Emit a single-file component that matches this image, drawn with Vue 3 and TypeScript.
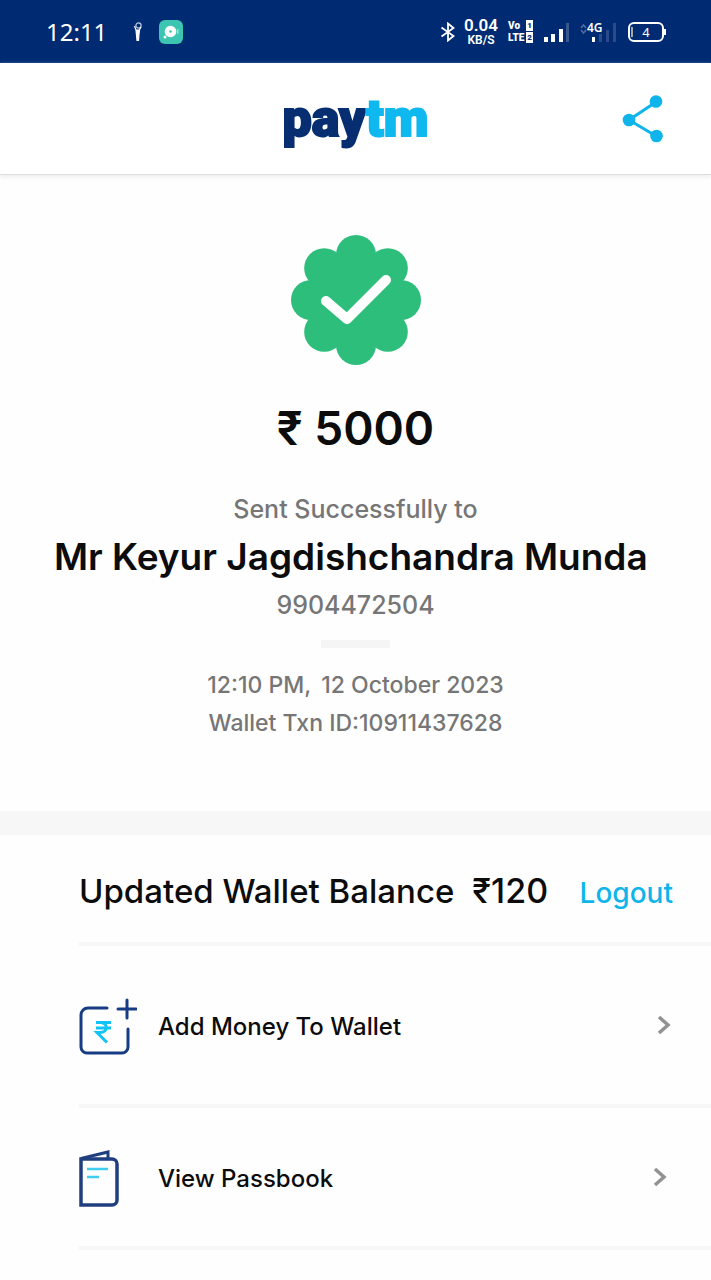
<script setup lang="ts">
interface Action {
  id: 'add' | 'passbook'
  label: string
}

const payment = {
  amount: '₹ 5000',
  recipient: 'Mr Keyur Jagdishchandra Munda',
  phone: '9904472504',
  time: '12:10 PM,',
  date: '12 October 2023',
  transaction: 'Wallet Txn ID:10911437628',
}

const balance = '₹120'

const actions: Action[] = [
  { id: 'add', label: 'Add Money To Wallet' },
  { id: 'passbook', label: 'View Passbook' },
]

const petals = Array.from({ length: 8 }, (_, i) => ({
  x: 65 + 45 * Math.cos((i * Math.PI) / 4),
  y: 65 + 45 * Math.sin((i * Math.PI) / 4),
}))
</script>

<template>
  <div class="screen">
    <div class="status">
      <div class="status-left">
        <span class="clock">12:11</span>
        <svg class="figure" width="10" height="20" viewBox="0 0 10 20" aria-hidden="true">
          <circle cx="5.5" cy="3.5" r="2.6" fill="none" stroke="#b9c8e6" stroke-width="1.2" />
          <path d="M1.5 4 3 8M8 5 6 8.500M3 8h3.500L6 12l-.5 6.500H4L3.500 13Z" fill="#fff" stroke="#fff" stroke-width="1.2" />
        </svg>
        <svg width="24" height="24" viewBox="0 0 24 24" aria-hidden="true">
          <rect width="24" height="24" rx="6" fill="#3cc5b0" />
          <circle cx="11.500" cy="11.500" r="5.800" fill="#fff" />
          <circle cx="11.500" cy="11.500" r="1.300" fill="#3cc5b0" />
          <circle cx="6" cy="17" r="1.500" fill="#fff" />
          <path d="M18.800 9v5" stroke="#a8e8dc" stroke-width="1.200" />
        </svg>
      </div>
      <div class="status-right">
        <svg width="16" height="20" viewBox="0 0 16 20" fill="none" stroke="#fff" stroke-width="1.800" aria-hidden="true">
          <path d="M1.500 5.500 13.500 14 8 18.500V1.500L13.500 6 1.500 14.500" />
        </svg>
        <div class="speed"><span class="rate">0.04</span><span class="unit">KB/S</span></div>
        <div class="volte">
          <span>Vo<b>1</b></span>
          <span>LTE<b>2</b></span>
        </div>
        <svg class="signal" width="26" height="20" viewBox="0 0 26 20" aria-hidden="true">
          <path d="M0 15h4v5H0zM7 12h4v8H7zM15 7h4v13h-4z" fill="#fff" />
          <path d="M22 1h3v19h-3z" fill="#39578f" />
        </svg>
        <svg class="network" width="36" height="28" viewBox="0 -4 36 28" aria-hidden="true">
          <path d="M1 6 3.500 3 6 6M1 8l2.500 3L6 8" fill="none" stroke="#526ca1" stroke-width="1.500" />
          <path d="M12 15h3v5h-3z" fill="#fff" />
          <path d="M19 12h3v8h-3zM26 8h3v12h-3zM33 1h3v19h-3z" fill="#2b4a87" />
          <text x="7" y="10">4G</text>
        </svg>
        <svg class="battery" width="38" height="20" viewBox="0 0 38 20" aria-hidden="true">
          <rect x="1" y="1" width="34" height="18" rx="5" fill="none" stroke="#fff" stroke-width="2" />
          <path d="M4 5v10" stroke="#d8d6b0" stroke-width="1.500" />
          <path d="M37 7v6" stroke="#fff" stroke-width="2" />
          <text x="18" y="15" text-anchor="middle">4</text>
        </svg>
      </div>
    </div>

    <header class="header">
      <span></span>
      <div class="logo"><span class="pay">pay</span><span class="tm">tm</span></div>
      <button class="share" type="button" aria-label="Share">
        <svg width="42" height="48" viewBox="0 0 42 48" aria-hidden="true">
          <path d="M34 7 7 25l27 16" fill="none" stroke="#0fb5ea" stroke-width="3" />
          <g fill="#0fb5ea"><circle cx="34" cy="6.500" r="6.300" /><circle cx="7" cy="25" r="6.300" /><circle cx="34.500" cy="41" r="6.300" /></g>
        </svg>
      </button>
    </header>

    <main>
      <section class="receipt">
        <svg class="badge" width="130" height="130" viewBox="0 0 130 130" role="img" aria-label="Success">
          <g fill="#2dbe7c">
            <circle cx="65" cy="65" r="47" />
            <circle v-for="(p, i) in petals" :key="i" :cx="p.x" :cy="p.y" r="20" />
          </g>
          <path d="M35 66 56 84 95 45" fill="none" stroke="#fff" stroke-width="10" stroke-linecap="round" stroke-linejoin="round" />
        </svg>
        <p class="amount">{{ payment.amount }}</p>
        <p class="caption">Sent Successfully to</p>
        <h1 class="name">{{ payment.recipient }}&nbsp;</h1>
        <p class="caption">{{ payment.phone }}</p>
        <div class="pill"></div>
        <p class="detail"><span class="time">{{ payment.time }}</span>{{ payment.date }}</p>
        <p class="detail">{{ payment.transaction }}</p>
      </section>

      <section class="wallet">
        <div class="balance">
          <h2 class="balance-label">Updated Wallet Balance</h2>
          <span class="balance-value">{{ balance }}</span>
          <a class="logout" href="#">Logout</a>
        </div>
        <button v-for="a in actions" :key="a.id" type="button" class="action" :class="a.id">
          <span class="icon">
            <svg v-if="a.id === 'add'" width="58" height="58" viewBox="0 0 58 58" fill="none" stroke="#173c83" stroke-width="3" stroke-linecap="round" aria-hidden="true">
              <path d="M28 10H9a7 7 0 0 0-7 7v32a6 6 0 0 0 6 6h35a6 6 0 0 0 6-6V31M48 2v18M39 11h18" />
              <path d="M17 24.500h15M17 30h15M17 24.500h4c8.500 0 8.500 10 0 10h-3l10 10" stroke="#12c3f5" stroke-width="3" stroke-linecap="butt" />
            </svg>
            <svg v-else width="40" height="58" viewBox="0 0 40 58" fill="none" stroke="#203f80" stroke-width="3.500" aria-hidden="true">
              <path d="M2 9h31a5 5 0 0 1 5 5v36a5 5 0 0 1-5 5H2Z" />
              <path d="M2 8.500 29 2v7" stroke-width="3" />
              <path d="M8 19h21M8 27h12" stroke="#3fcdf0" stroke-width="2.500" />
            </svg>
          </span>
          <span class="label">{{ a.label }}</span>
          <svg class="chevron" width="14" height="20" viewBox="0 0 14 20" fill="none" stroke="#929292" stroke-width="3.500" aria-hidden="true">
            <path d="m2 2 9 8-9 8" />
          </svg>
        </button>
      </section>
    </main>
  </div>
</template>

<style>
body {
  margin: 0;
  background: #fefefe;
}
</style>

<style scoped>
.screen {
  min-height: 100vh;
  background: #fefefe;
  color: #0c0c0c;
  font-family: Inter, "Noto Sans", sans-serif;
}

p,
h1,
h2 {
  margin: 0;
}

button {
  padding: 0;
  border: 0;
  background: none;
  font: inherit;
  color: inherit;
  cursor: pointer;
}

svg {
  display: block;
  flex: none;
}

.status {
  display: flex;
  align-items: center;
  justify-content: space-between;
  height: 63px;
  padding: 0 45px 0 46px;
  background: #002b72;
  color: #fff;
  font-family: "Noto Sans", sans-serif;
}

.status-left,
.status-right {
  display: flex;
  align-items: center;
}

.clock {
  margin-right: 26px;
  font-size: 24px;
  line-height: 32px;
}

.figure {
  margin-right: 16px;
}

.speed {
  display: flex;
  flex-direction: column;
  align-items: center;
  margin: 0 10px 0 8px;
  font-family: Roboto, sans-serif;
  font-weight: 600;
}

.rate {
  font-size: 17px;
  line-height: 17px;
}

.unit {
  font-size: 12px;
  line-height: 12px;
}

.volte {
  display: flex;
  flex-direction: column;
  gap: 1px;
  width: 25px;
  margin-right: 11px;
  font: 900 10px/11px Roboto, sans-serif;
}

.volte span {
  display: flex;
  justify-content: space-between;
}

.volte b {
  padding: 0 1px;
  background: #fff;
  color: #002b72;
  font-size: 8px;
}

.signal {
  margin-right: 10px;
}

.network {
  margin-right: 12px;
}

.network text {
  fill: #fff;
  font-size: 12px;
  font-weight: 600;
}

.battery text {
  fill: #fff;
  font-size: 13px;
}

.header {
  display: grid;
  grid-template-columns: 1fr auto 1fr;
  align-items: center;
  height: 111px;
  padding: 0 47px;
  border-bottom: 1px solid #dedede;
  box-shadow: 0 2px 4px #ededed;
  background: #fff;
}

.logo {
  font: 900 52px/64px Roboto, sans-serif;
  -webkit-text-stroke: 2px currentColor;
}

.pay {
  color: #062e70;
}

.tm {
  color: #0fb9ef;
}

.share {
  justify-self: end;
}

.receipt {
  display: flex;
  flex-direction: column;
  align-items: center;
  padding: 60px 24px 69px;
  border-bottom: 24px solid #f7f7f7;
  text-align: center;
}

.amount {
  margin: 35px 0 33px;
  font-size: 46px;
  line-height: 56px;
  font-weight: 600;
}

.caption {
  color: #767676;
  font-size: 25px;
  line-height: 40px;
  font-weight: 500;
}

.name {
  font-size: 37px;
  line-height: 56px;
  font-weight: 600;
}

.pill {
  width: 69px;
  height: 8px;
  margin: 15px 0 18px;
  background: #f5f5f5;
}

.detail {
  color: #767676;
  font-size: 23px;
  line-height: 38px;
  font-weight: 500;
}

.time {
  margin-right: 10px;
}

.wallet {
  padding-left: 79px;
}

.balance {
  display: flex;
  align-items: baseline;
  padding: 36px 38px 29px 0;
  border-bottom: 4px solid #f7f7f7;
  line-height: 40px;
  white-space: nowrap;
}

.balance-label {
  font-size: 33px;
  font-weight: 500;
}

.balance-value {
  margin-left: 18px;
  font-size: 34px;
  font-weight: 500;
}

.logout {
  margin-left: auto;
  color: #0fb5ea;
  font-size: 28px;
  font-weight: 500;
  text-decoration: none;
}

.action {
  display: flex;
  align-items: center;
  width: 100%;
  height: 162px;
  padding-right: 40px;
  border-bottom: 4px solid #f7f7f7;
  text-align: left;
}

.passbook {
  height: 142px;
  padding-right: 44px;
}

.icon {
  flex: none;
  width: 79px;
  padding-top: 3px;
}

.label {
  flex: 1;
  padding-top: 3px;
  font-size: 24px;
  line-height: 32px;
  font-weight: 500;
}
</style>
